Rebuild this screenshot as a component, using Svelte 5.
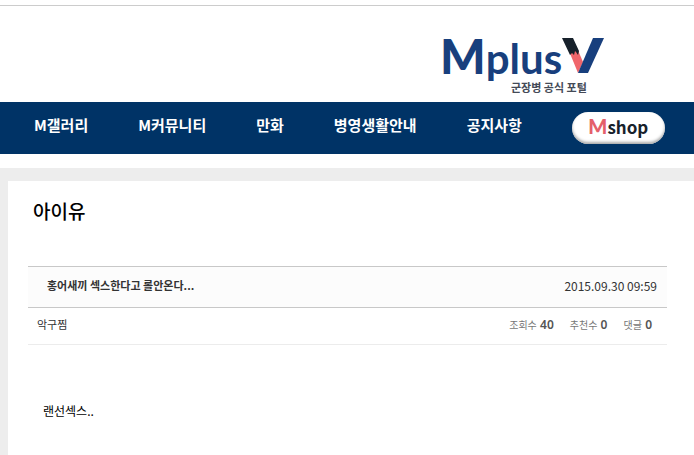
<script>
  const menu = ['M갤러리', 'M커뮤니티', '만화', '병영생활안내', '공지사항'];
  const stats = [
    { label: '조회수', value: 40 },
    { label: '추천수', value: 0 },
    { label: '댓글', value: 0 }
  ];
</script>

<header>
  <a class="logo" href="#home" aria-label="MplusV 군장병 공식 포털">
    <span class="brand">
      <span class="name"><span class="big">M</span>plus</span>
      <svg width="42" height="36" viewBox="0 0 42 36" aria-hidden="true">
        <path d="M7 13L15 10L21 24L16 35Z" fill="#f0666b" />
        <path d="M31 0H42L26 35H16Z" fill="#183f7d" />
        <path d="M0 0H11L17 13L16 17L14 14L13 13L12 17L10 15L8 17Z" fill="#17212b" />
      </svg>
    </span>
    <span class="tagline">군장병 공식 포털</span>
  </a>
</header>

<nav>
  {#each menu as item}
    <a href="#menu">{item}</a>
  {/each}
  <a class="shop" href="#shop"><b>M</b>shop</a>
</nav>

<main>
  <section>
    <h1>아이유</h1>
    <article>
      <div class="subject">
        <h2>홍어새끼 섹스한다고 롤안온다...</h2>
        <time datetime="2015-09-30T09:59">2015.09.30 09:59</time>
      </div>
      <div class="meta">
        <span>악구찜</span>
        <ul>
          {#each stats as stat}
            <li>{stat.label} <strong>{stat.value}</strong></li>
          {/each}
        </ul>
      </div>
      <p>랜선섹스..</p>
    </article>
  </section>
</main>

<style>
  :global(body) {
    background: #fff;
    font-family: 'Noto Sans CJK KR', sans-serif;
    color: #000;
  }
  a { color: inherit; text-decoration: none; }
  header {
    margin-top: 5px;
    border-top: 1px solid #ccc;
    height: 96px;
    display: flex;
    justify-content: flex-end;
  }
  .logo {
    display: flex;
    flex-direction: column;
    width: 163px;
    margin-right: 91px;
    padding-top: 32px;
  }
  .brand {
    display: flex;
    align-items: flex-start;
    justify-content: space-between;
    height: 41px;
    color: #183f7d;
  }
  .name {
    font-family: Lato, sans-serif;
    font-size: 42px;
    line-height: 36px;
    font-weight: 700;
    white-space: nowrap;
  }
  .big { font-size: 48px; font-weight: 900; }
  svg { flex: none; }
  .tagline {
    margin-left: 71px;
    font-size: 11px;
    line-height: 16px;
    font-weight: 700;
    color: #444a57;
    white-space: nowrap;
  }
  nav {
    display: flex;
    align-items: flex-start;
    gap: 50px;
    height: 42px;
    padding: 10px 28px 0 34px;
    background: #003366;
    color: #fff;
    font-size: 15px;
    line-height: 26px;
    font-weight: 700;
    white-space: nowrap;
  }
  .shop {
    box-sizing: border-box;
    width: 93px;
    height: 32px;
    border-radius: 16px;
    background: #fff;
    box-shadow: inset 0 -2px 3px #aaa;
    color: #17212b;
    font-size: 17px;
    line-height: 29px;
    text-align: center;
  }
  .shop b { color: #e4606a; font-family: Lato, sans-serif; font-size: 20px; font-weight: 900; }
  main {
    margin-top: 14px;
    padding: 13px 0 0 8px;
    background: #ededed;
  }
  section {
    min-height: 274px;
    box-sizing: border-box;
    padding: 16px 27px 0 20px;
    background: #fff;
  }
  h1 {
    margin: 0 0 41px 5px;
    font-size: 19px;
    line-height: 28px;
    font-weight: 500;
  }
  .subject, .meta, ul {
    display: flex;
    align-items: center;
    justify-content: space-between;
  }
  .subject, .meta {
    box-sizing: border-box;
    padding-bottom: 4px;
  }
  .subject {
    height: 42px;
    padding-left: 19px;
    padding-right: 10px;
    border-top: 1px solid #c8c8c8;
    border-bottom: 1px solid #c8c8c8;
    background: #fcfcfc;
    color: #333;
  }
  h2 { margin: 0; font-size: 11px; font-weight: 700; }
  time { font-size: 12px; }
  .meta {
    height: 37px;
    padding-left: 9px;
    padding-right: 15px;
    border-bottom: 1px solid #ececec;
    color: #333;
    font-size: 11px;
  }
  ul {
    margin: 0;
    padding: 0;
    gap: 16px;
    list-style: none;
    font-size: 10px;
    color: #777;
  }
  strong { margin-left: 1px; font-family: 'Noto Sans', sans-serif; font-size: 12px; font-weight: 600; color: #555; }
  p { margin: 57px 15px 0; font-size: 12px; line-height: 18px; }
</style>
